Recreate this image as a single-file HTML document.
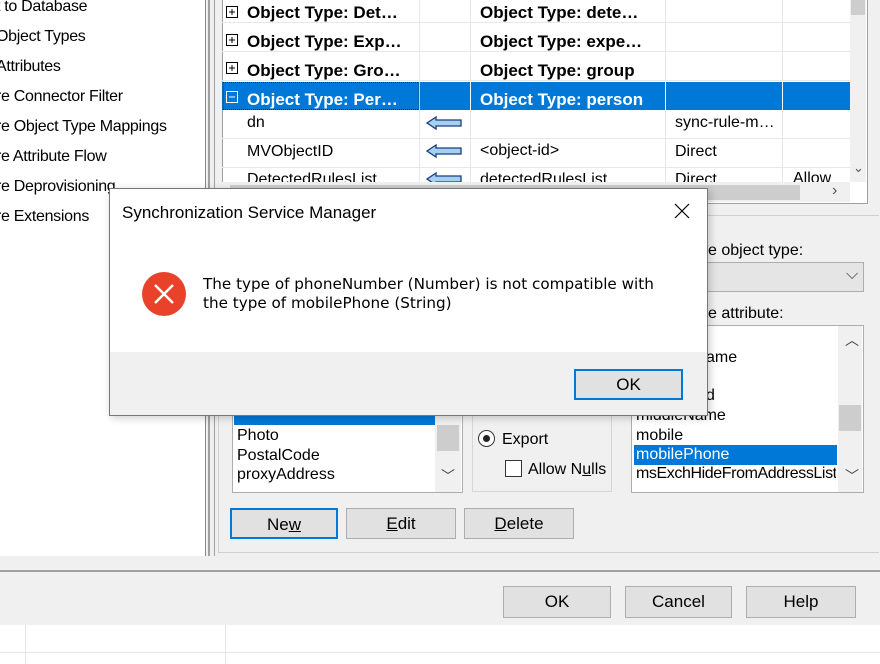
<!DOCTYPE html><html><head><style>
body{margin:0;width:880px;height:664px;overflow:hidden;background:#f0f0f0;font-family:"Liberation Sans",sans-serif;font-size:16px;color:#000;position:relative}
.a{position:absolute}
.t{white-space:nowrap}
.btn{position:absolute;background:#e1e1e1;border:1px solid #adadad;box-sizing:border-box;text-align:center;font-size:17px}
</style></head><body>
<div class="a" style="left:0;top:0;width:205px;height:556px;background:#fff;border-right:1px solid #888"></div>
<div class="a t" style="left:-4px;top:-8px;line-height:30px;font-size:16px;letter-spacing:-0.3px">
<div>t to Database</div><div>Object Types</div><div>Attributes</div><div>re Connector Filter</div><div>re Object Type Mappings</div><div>re Attribute Flow</div><div>re Deprovisioning</div><div>re Extensions</div></div>
<div class="a" style="left:208px;top:0;width:2px;height:556px;background:#a0a0a0"></div>
<div class="a" style="left:214px;top:0;width:1px;height:556px;background:#a0a0a0"></div>
<div class="a" style="left:222px;top:0;width:644px;height:203px;background:#fff;border:1px solid #a0a0a0;border-top:none"></div>
<svg class="a" style="left:222px;top:0" width="628" height="182">
<g stroke="#e8e8e8"><line x1="0" y1="22.5" x2="628" y2="22.5"/><line x1="0" y1="51.5" x2="628" y2="51.5"/><line x1="0" y1="80.5" x2="628" y2="80.5"/><line x1="0" y1="138.5" x2="628" y2="138.5"/><line x1="0" y1="167.5" x2="628" y2="167.5"/>
<line x1="197.5" y1="0" x2="197.5" y2="182"/><line x1="248.5" y1="0" x2="248.5" y2="182"/><line x1="443.5" y1="0" x2="443.5" y2="182"/><line x1="560.5" y1="0" x2="560.5" y2="182"/></g>
<rect x="0" y="82" width="628" height="28" fill="#0078d7"/>
<g stroke="#fff"><line x1="197.5" y1="82" x2="197.5" y2="110"/><line x1="248.5" y1="82" x2="248.5" y2="110"/><line x1="443.5" y1="82" x2="443.5" y2="110"/><line x1="560.5" y1="82" x2="560.5" y2="110"/></g>
<rect x="1" y="82.5" width="196" height="27" fill="none" stroke="#331" stroke-dasharray="1 1"/>
<g fill="none" stroke="#000"><rect x="4.5" y="6.5" width="11" height="11"/><rect x="4.5" y="34.5" width="11" height="11"/><rect x="4.5" y="62.5" width="11" height="11"/><path d="M7 12h6M10 9v6M7 40h6M10 37v6M7 68h6M10 65v6"/></g>
<g fill="none" stroke="#fff"><rect x="4.5" y="91.5" width="11" height="11"/><path d="M7 97h6"/></g>
<g fill="#a6d0f0" stroke="#1a3c80" stroke-width="1.3"><path d="M214 117l-9 6 9 6v-3h25v-6h-25z"/><path d="M214 145l-9 6 9 6v-3h25v-6h-25z"/><path d="M214 173l-9 6 9 6v-3h25v-6h-25z"/></g>
</svg>
<div class="a t" style="left:247px;top:-2px;font-weight:bold;font-size:17px;line-height:29px">Object Type: Det…<br>Object Type: Exp…<br>Object Type: Gro…<br><span style="color:#fff">Object Type: Per…</span></div>
<div class="a t" style="left:480px;top:-2px;font-weight:bold;font-size:17px;line-height:29px">Object Type: dete…<br>Object Type: expe…<br>Object Type: group<br><span style="color:#fff">Object Type: person</span></div>
<div class="a t" style="left:247px;top:109px;line-height:28.5px;height:73px;overflow:hidden">dn<br>MVObjectID<br>DetectedRulesList</div>
<div class="a t" style="left:480px;top:137px;line-height:28.5px;height:45px;overflow:hidden">&lt;object-id&gt;<br>detectedRulesList</div>
<div class="a t" style="left:675px;top:109px;line-height:28.5px;height:73px;overflow:hidden">sync-rule-m…<br>Direct<br>Direct</div>
<div class="a t" style="left:793px;top:170px;height:12px;overflow:hidden">Allow</div>
<div class="a" style="left:850px;top:0;width:16px;height:182px;background:#f0f0f0"></div>
<div class="a" style="left:851px;top:0;width:14px;height:15px;background:#cdcdcd"></div>
<div class="a" style="left:853px;top:160px;font-size:13px;color:#555">⌄</div>
<div class="a" style="left:222px;top:182px;width:628px;height:20px;background:#f0f0f0"></div>
<div class="a" style="left:230px;top:185px;width:570px;height:15px;background:#cdcdcd"></div>
<div class="a" style="left:832px;top:182px;font-size:16px;color:#555">›</div>
<div class="a" style="left:218px;top:215px;width:660px;height:336px;border:1px solid #d0d0d0;border-right:none"></div>
<div class="a t" style="left:708px;top:242px">e object type:</div>
<div class="a" style="left:690px;top:262px;width:174px;height:30px;background:#e5e5e5;border:1px solid #adadad;box-sizing:border-box"></div>
<div class="a" style="left:846px;top:266px;color:#444">⌵</div>
<div class="a t" style="left:708px;top:305px">e attribute:</div>
<div class="a" style="left:631px;top:325px;width:233px;height:168px;background:#fff;border:1px solid #adadad;box-sizing:border-box"></div>
<div class="a" style="left:838px;top:326px;width:24px;height:166px;background:#f0f0f0"></div>
<div class="a" style="left:839px;top:405px;width:22px;height:26px;background:#cdcdcd"></div>
<div class="a" style="left:845px;top:330px;font-size:14px;color:#444">︿</div>
<div class="a" style="left:845px;top:466px;font-size:14px;color:#444">﹀</div>
<div class="a t" style="left:706px;top:349px">ame</div>
<div class="a t" style="left:706px;top:387px">d</div>
<div class="a t" style="left:636px;top:406px;line-height:19.5px">middleName<br>mobile</div>
<div class="a" style="left:634px;top:445px;width:203px;height:20px;background:#0078d7"></div>
<div class="a t" style="left:636px;top:446px;color:#fff">mobilePhone</div>
<div class="a t" style="left:636px;top:465px;width:200px;overflow:hidden;letter-spacing:-0.4px">msExchHideFromAddressLists</div>
<div class="a" style="left:472px;top:415px;width:138px;height:75px;border:1px solid #d5d5d5"></div>
<div class="a" style="left:478px;top:430px;width:17px;height:17px;border:1px solid #333;border-radius:50%;box-sizing:border-box;background:#fff"></div>
<div class="a" style="left:483px;top:435px;width:7px;height:7px;background:#222;border-radius:50%"></div>
<div class="a t" style="left:502px;top:431px">Export</div>
<div class="a" style="left:505px;top:460px;width:17px;height:17px;border:1px solid #333;background:#fff;box-sizing:border-box"></div>
<div class="a t" style="left:528px;top:461px">Allow N<u>u</u>lls</div>
<div class="a" style="left:232px;top:405px;width:231px;height:88px;background:#fff;border:1px solid #adadad;box-sizing:border-box"></div>
<div class="a" style="left:435px;top:406px;width:26px;height:86px;background:#f0f0f0"></div>
<div class="a" style="left:437px;top:425px;width:22px;height:26px;background:#cdcdcd"></div>
<div class="a" style="left:441px;top:466px;font-size:14px;color:#444">﹀</div>
<div class="a" style="left:234px;top:406px;width:201px;height:19px;background:#0078d7"></div>
<div class="a t" style="left:237px;top:426px;line-height:19.5px">Photo<br>PostalCode<br>proxyAddress</div>
<div class="btn" style="left:230px;top:508px;width:108px;height:31px;line-height:29px;border:2px solid #0078d7">Ne<u>w</u></div>
<div class="btn" style="left:346px;top:508px;width:110px;height:31px;line-height:29px"><u>E</u>dit</div>
<div class="btn" style="left:464px;top:508px;width:110px;height:31px;line-height:29px"><u>D</u>elete</div>
<div class="a" style="left:0;top:570px;width:880px;height:2px;background:#a0a0a0"></div>
<div class="btn" style="left:503px;top:586px;width:108px;height:32px;line-height:30px">OK</div>
<div class="btn" style="left:625px;top:586px;width:107px;height:32px;line-height:30px">Cancel</div>
<div class="btn" style="left:746px;top:586px;width:110px;height:32px;line-height:30px">Help</div>
<div class="a" style="left:0;top:625px;width:880px;height:39px;background:#fff"></div>
<div class="a" style="left:0;top:652px;width:880px;height:1px;background:#e6e6e6"></div>
<div class="a" style="left:225px;top:625px;width:1px;height:39px;background:#e6e6e6"></div>
<div class="a" style="left:25px;top:625px;width:1px;height:39px;background:#e6e6e6"></div>
<div class="a" style="left:109px;top:188px;width:599px;height:228px;background:#fff;border:1px solid #777;box-sizing:border-box;box-shadow:2px 2px 8px rgba(0,0,0,.2)"></div>
<div class="a" style="left:110px;top:352px;width:597px;height:63px;background:#f0f0f0"></div>
<div class="a t" style="left:122px;top:203px;font-size:17px">Synchronization Service Manager</div>
<svg class="a" style="left:673px;top:202px" width="18" height="18"><path d="M2 2L16 16M16 2L2 16" stroke="#000" stroke-width="1.2"/></svg>
<svg class="a" style="left:141px;top:271px" width="46" height="46"><circle cx="23" cy="23" r="22" fill="#e8432a"/><path d="M14 14L32 32M32 14L14 32" stroke="#fff" stroke-width="2.5"/></svg>
<div class="a t" style="left:203px;top:275px;font-family:'DejaVu Sans',sans-serif;font-size:15.2px;line-height:19px">The type of phoneNumber (Number) is not compatible with<br>the type of mobilePhone (String)</div>
<div class="btn" style="left:574px;top:369px;width:109px;height:31px;line-height:27px;border:2px solid #0078d7">OK</div>
</body></html>
